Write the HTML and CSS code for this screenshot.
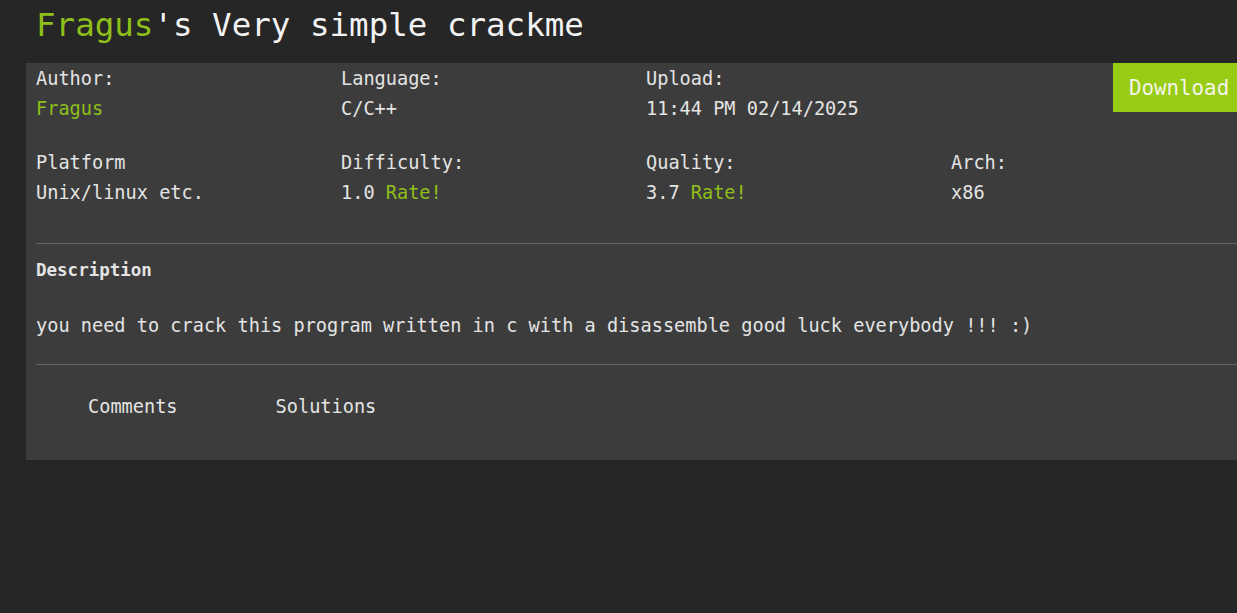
FILE: index.html
```html
<!DOCTYPE html>
<html>
<head>
<meta charset="utf-8">
<link rel="stylesheet" href="styles.css">
</head>
<body>
<h1 class="title"><span class="green">Fragus</span>'s Very simple crackme</h1>
<div class="panel">
  <a class="download">Download</a>
  <div class="grid">
    <div class="cell"><div>Author:</div><div class="green">Fragus</div></div>
    <div class="cell"><div>Language:</div><div>C/C++</div></div>
    <div class="cell"><div>Upload:</div><div>11:44 PM 02/14/2025</div></div>
    <div class="cell"></div>
    <div class="cell"><div>Platform</div><div>Unix/linux etc.</div></div>
    <div class="cell"><div>Difficulty:</div><div>1.0 <span class="green">Rate!</span></div></div>
    <div class="cell"><div>Quality:</div><div>3.7 <span class="green">Rate!</span></div></div>
    <div class="cell"><div>Arch:</div><div>x86</div></div>
  </div>
  <hr class="sep sep1">
  <div class="desc-title">Description</div>
  <div class="desc">you need to crack this program written in c with a disassemble good luck everybody !!! :)</div>
  <hr class="sep sep2">
  <div class="tabs"><span>Comments</span><span>Solutions</span></div>
</div>
</body>
</html>
```
FILE: styles.css
```css
html, body {
  margin: 0;
  padding: 0;
  background: #262626;
  overflow: hidden;
}
body {
  font-family: "DejaVu Sans Mono", "Liberation Mono", monospace;
  color: #e4e4e4;
  font-size: 18.6px;
  line-height: 30px;
}
.green { color: #8fbf1a; }
.title {
  margin: 0;
  padding: 5px 0 0 36px;
  height: 63px;
  box-sizing: border-box;
  font-size: 32.5px;
  line-height: 40px;
  font-weight: normal;
  color: #f2f2f2;
}
.panel {
  position: relative;
  margin-left: 26px;
  width: 1240px;
  background: #3c3c3c;
  padding: 1px 0 38px 10px;
  box-sizing: border-box;
}
.download {
  position: absolute;
  top: 0;
  left: 1087px;
  width: 160px;
  height: 49px;
  box-sizing: border-box;
  padding: 2px 0 0 16px;
  background: #98cb14;
  color: #f4f4e8;
  font-size: 20.8px;
  line-height: 47px;
}
.grid {
  display: grid;
  grid-template-columns: repeat(4, 305px);
  row-gap: 24px;
}
.sep {
  border: 0;
  height: 1px;
  background: #666;
  margin: 0;
}
.sep1 { margin-top: 35px; }
.desc-title {
  margin-top: 11px;
  font-weight: bold;
  font-size: 17.5px;
}
.desc { margin-top: 26px; }
.sep2 { margin-top: 23px; }
.tabs {
  margin-top: 27px;
  padding-left: 52px;
  display: flex;
  gap: 98px;
}
```
